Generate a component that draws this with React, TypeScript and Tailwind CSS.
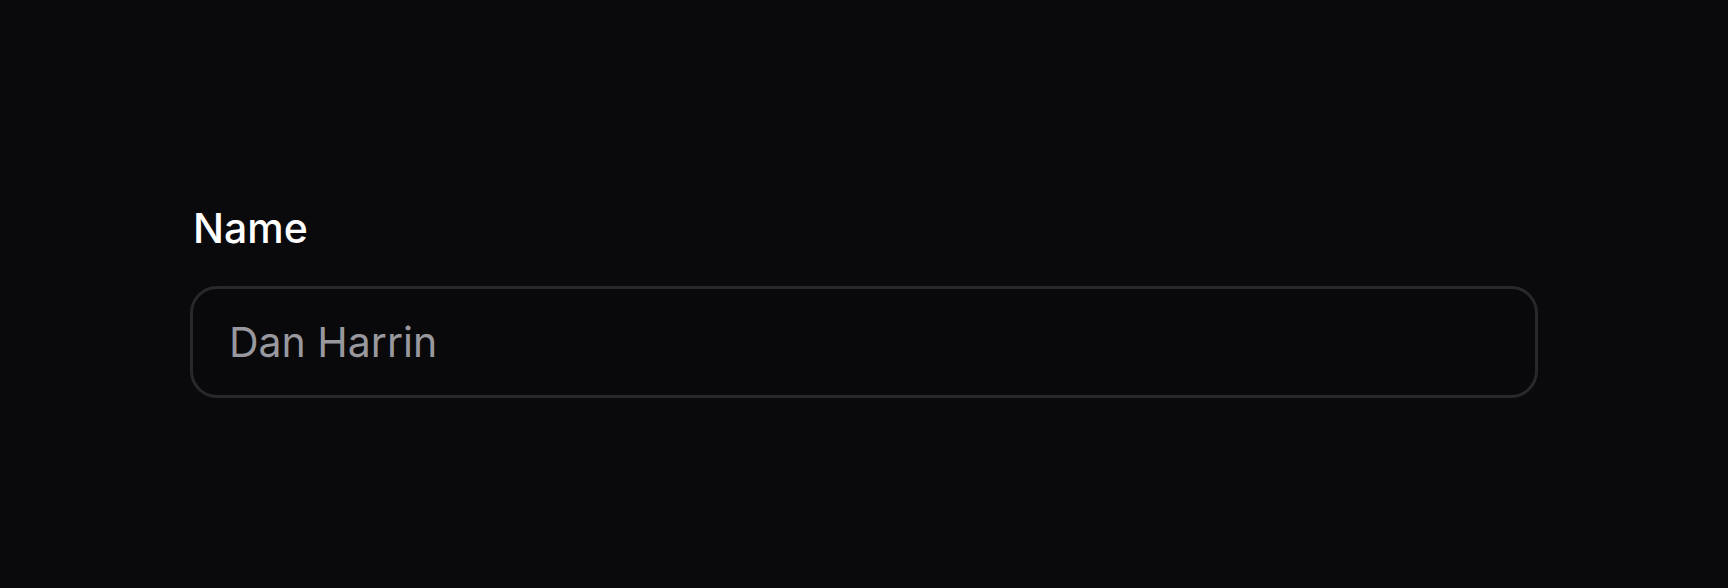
export default function App() {
  return (
    <div
      className="min-h-[588px] w-full bg-[#0a0a0c] pl-[190px] pt-[198px]"
      style={{ fontFamily: "Inter, 'Noto Sans', sans-serif" }}
    >
      <div className="flex w-[1348px] flex-col gap-[28px]">
        <label className="pl-[3px] text-[41px] font-medium leading-[60px] text-white">
          Name
        </label>
        <div className="flex h-[112px] items-center rounded-[27px] border-[3px] border-[#29292c] bg-[#09090b] px-[36px]">
          <span className="text-[41px] leading-[60px] text-[#98989e]">
            Dan Harrin
          </span>
        </div>
      </div>
    </div>
  );
}
